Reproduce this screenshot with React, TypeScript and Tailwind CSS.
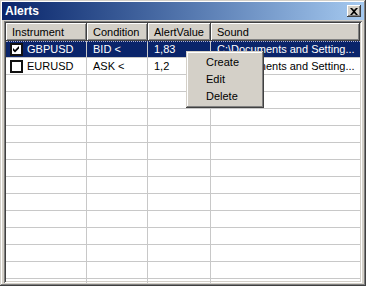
import React from "react";

const font = { fontFamily: '"Liberation Sans", Arial, sans-serif' };

const cols = [
  { label: "Instrument", w: 81 },
  { label: "Condition", w: 61 },
  { label: "AlertValue", w: 63 },
  { label: "Sound", w: 149 },
];

const rows = [
  { checked: true, inst: "GBPUSD", cond: "BID <", val: "1,83", sound: "C:\\Documents and Setting...", sel: true },
  { checked: false, inst: "EURUSD", cond: "ASK <", val: "1,2", sound: "C:\\Documents and Setting...", sel: false },
];

function Check({ checked }: { checked: boolean }) {
  return (
    <div className="w-[13px] h-[13px] bg-white shrink-0 border-2 border-[#111] flex items-center justify-center">
      {checked && (
        <svg width="7" height="7" viewBox="0 0 7 7">
          <path d="M0 2 L2 4 L6 0 L6 2.5 L2 6.5 L0 4.5 Z" fill="#000" />
        </svg>
      )}
    </div>
  );
}

export default function App() {
  const empty = Array.from({ length: 13 });
  return (
    <div
      className="w-[366px] h-[286px] bg-[#d4d0c8] p-[2px] flex flex-col overflow-hidden relative text-[11px] shadow-[inset_-1px_-1px_#404040,inset_1px_1px_#d4d0c8,inset_-2px_-2px_#808080,inset_2px_2px_#fff]"
      style={font}
    >
      <div className="h-[18px] shrink-0 bg-gradient-to-r from-[#0a246a] to-[#a6caf0] flex items-center justify-between pl-[3px] pr-[3px]">
        <span className="text-white font-bold text-[12px] leading-none">Alerts</span>
        <div className="w-[14px] h-[12px] bg-[#d4d0c8] flex items-center justify-center shadow-[inset_-1px_-1px_#404040,inset_1px_1px_#fff,inset_-2px_-2px_#808080]">
          <svg width="8" height="7" viewBox="0 0 8 7">
            <path d="M0 0 L2 0 L4 2 L6 0 L8 0 L5 3.5 L8 7 L6 7 L4 5 L2 7 L0 7 L3 3.5 Z" fill="#000" />
          </svg>
        </div>
      </div>
      <div className="flex-1 mt-[1px] mx-[2px] mb-[1px] bg-white p-[2px] overflow-hidden shadow-[inset_1px_1px_#808080,inset_-1px_-1px_#fff,inset_2px_2px_#404040,inset_-2px_-2px_#d4d0c8]">
        <div className="flex h-[18px]">
          {cols.map((c) => (
            <div
              key={c.label}
              className="h-[18px] bg-[#d4d0c8] flex items-center pl-[6px] shrink-0 shadow-[inset_-1px_-1px_#404040,inset_1px_1px_#fff,inset_-2px_-2px_#808080]"
              style={{ width: c.w }}
            >
              {c.label}
            </div>
          ))}
          <div className="flex-1 h-[18px] bg-[#d4d0c8] shadow-[inset_-1px_-1px_#404040,inset_1px_1px_#fff,inset_-2px_-2px_#808080]" />
        </div>
        {rows.map((r, i) => (
          <div
            key={i}
            className={`relative flex h-[17px] border-b border-[#c8c8c8] ${r.sel ? "bg-[#0a246a] text-white" : "text-black"}`}
          >
            {r.sel && (
              <div className="absolute left-0 right-0 top-0 h-0 border-t border-dotted border-[#b0b0d0]" />
            )}
            <div className="w-[81px] shrink-0 flex items-center pl-[4px] gap-[4px] border-r border-[#c8c8c8]">
              <Check checked={r.checked} />
              <span>{r.inst}</span>
            </div>
            <div className="w-[61px] shrink-0 flex items-center pl-[6px] border-r border-[#c8c8c8]">{r.cond}</div>
            <div className="w-[63px] shrink-0 flex items-center pl-[6px] border-r border-[#c8c8c8]">{r.val}</div>
            <div className="w-[149px] shrink-0 flex items-center pl-[6px] whitespace-nowrap overflow-hidden">{r.sound}</div>
          </div>
        ))}
        {empty.map((_, i) => (
          <div key={i} className="flex h-[17px] border-b border-[#c8c8c8]">
            <div className="w-[81px] shrink-0 border-r border-[#c8c8c8]" />
            <div className="w-[61px] shrink-0 border-r border-[#c8c8c8]" />
            <div className="w-[63px] shrink-0 border-r border-[#c8c8c8]" />
            <div className="w-[149px] shrink-0" />
          </div>
        ))}
      </div>
      <div className="absolute left-[186px] top-[51px] w-[78px] bg-[#d4d0c8] py-[3px] shadow-[inset_-1px_-1px_#404040,inset_1px_1px_#d4d0c8,inset_-2px_-2px_#808080,inset_2px_2px_#fff]">
        {["Create", "Edit", "Delete"].map((m) => (
          <div key={m} className="h-[17px] flex items-center pl-[20px] text-black">
            {m}
          </div>
        ))}
      </div>
    </div>
  );
}
